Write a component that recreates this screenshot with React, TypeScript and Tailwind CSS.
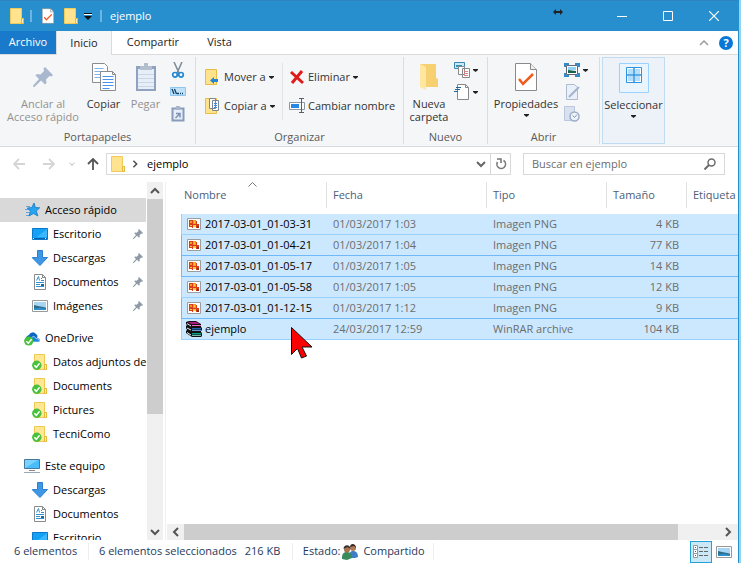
import React from 'react';
import clsx from 'clsx';

interface FileRow {
  name: string;
  date: string;
  type: string;
  size: string;
  kind: 'png' | 'rar';
  edge: string;
}

interface NavItem {
  label: string;
  icon: React.ReactNode;
  root?: boolean;
  active?: boolean;
  pinned?: boolean;
}

const FolderIcon = ({ className = 'w-3.5 h-4' }: { className?: string }) => (
  <svg className={className} viewBox="0 0 14 16">
    <path d="M.5.5h11v10h2v5H.5z" fill="#ffe38f" stroke="#f0cb58" />
    <path d="M11.500 10.500h2v5h-2z" fill="#ffeeb5" stroke="#e3b93c" />
  </svg>
);

const SyncedFolderIcon = () => (
  <svg className="w-4 h-4" viewBox="0 0 16 16">
    <path d="M2.500.5h10v10h2v5h-12z" fill="#ffe795" stroke="#efc94f" />
    <path d="M12.500 10.500h2v5h-2z" fill="#ffeeb5" stroke="#e3b93c" />
    <circle cx="4.800" cy="11.200" r="4.700" fill="#45c13a" />
    <path d="M2.300 11.300l2 2 3.300-4" fill="none" stroke="#fff" strokeWidth="1.500" />
  </svg>
);

const StarIcon = () => (
  <svg className="w-4 h-4" viewBox="0 0 16 16">
    <path d="M2 4.500h4M1 7.500h4M2 10.500h4M2 13.500h4" stroke="#5aa9dd" />
    <path d="M10 1l1.300 4.500 4.400.3-3.400 3.300 1.600 4.900-4.400-2.500L5 14l1.500-4.700L3.300 6l4.600-.4z" fill="#27a4f2" stroke="#1277c4" strokeWidth=".8" />
  </svg>
);

const DesktopIcon = () => (
  <svg className="w-4 h-4" viewBox="0 0 16 16">
    <path d="M.5 2.500h15v11H.5z" fill="#12a1f5" stroke="#0a78cc" />
    <path d="M15 3v8H5z" fill="#3bb7ff" />
    <path d="M1 12.500h14" stroke="#075fa8" />
    <path d="M1 12.500h1M13 12.500h1" stroke="#fff" />
  </svg>
);

const DownloadIcon = () => (
  <svg className="w-4 h-4" viewBox="0 0 16 16">
    <path d="M5.500.5h5v7h5L8 15.500.5 8V7.500h5z" fill="#3d97e3" stroke="#2c7fd0" />
  </svg>
);

const DocumentIcon = () => (
  <svg className="w-4 h-4" viewBox="0 0 16 16">
    <path d="M2.500.5h8l3 3v12h-11z" fill="#fff" stroke="#8a8a8a" />
    <path d="M10.500.5v3h3" fill="none" stroke="#8a8a8a" />
    <path d="M4.500 6.500l2-4 1 4M9 4.500h1M9 6.500h3M4 8.500h8M4 10.500h4M4 12.500h8" fill="none" stroke="#3592d0" />
    <path d="M9 10h3v2H9z" fill="#24658f" />
  </svg>
);

const PictureIcon = () => (
  <svg className="w-4 h-4" viewBox="0 0 16 16">
    <path d="M.5 2.500h15v11H.5z" fill="#fff" stroke="#999" />
    <path d="M2 4h12v5H2z" fill="#a9d5f5" />
    <path d="M2 7l4 1 8 1.500V12H2z" fill="#2f6c8c" />
    <path d="M2 10.500l6-.8 6 1V12H2z" fill="#2c8ecb" />
  </svg>
);

const OneDriveIcon = () => (
  <svg className="w-4 h-4" viewBox="0 0 16 16">
    <path d="M2 10a4 4 0 0 1 3-5 4 4 0 0 1 7-1 3 3 0 0 1 1 4 2.700 2.700 0 0 1 2.500 4H4z" fill="#0d68c4" />
    <path d="M7 12V8.500C8 6 11 6 12 8.500c2 0 3.500 1 3.500 3.500z" fill="#1683e0" stroke="#fff" strokeWidth=".6" />
    <circle cx="4.700" cy="11" r="4.600" fill="#45c13a" />
    <path d="M2.300 11.200l2 2 3.300-4" fill="none" stroke="#fff" strokeWidth="1.500" />
  </svg>
);

const ComputerIcon = () => (
  <svg className="w-4 h-4" viewBox="0 0 16 16">
    <path d="M.5 1.500h15v9H.5z" fill="#49bdfb" stroke="#47799f" />
    <path d="M1 10L14 2H1z" fill="#7bd2fd" />
    <path d="M5 12.500h6" stroke="#888" />
    <path d="M0 14.500h16" stroke="#9aaab8" />
  </svg>
);

const PinIcon = ({ className, color }: { className: string; color: string }) => (
  <svg className={className} viewBox="0 0 20 20" fill={color}>
    <path d="M12 0l8 8-1.500 1.500-2-.5-3.500 3.500.5 3.500-1.500 1.500-4-4L1.500 20 0 20l.5-2L6 12 2.500 8.500 4 7l3.500.5L11 4l-.5-2.500z" />
  </svg>
);

const PngIcon = () => (
  <svg className="w-3.5 h-3" viewBox="0 0 14 12">
    <path d="M.5.5h13v11H.5z" fill="#fff" stroke="#9d9d9d" />
    <path d="M2 2h6v1h2v3h2v4H9V9H6v1H5V9H2z" fill="#dc3a1c" />
    <path d="M3 3h2v2H3zM6 2h3v4H6z" fill="#f79a1b" />
    <path d="M3 7h2v1H3zM7 3h1v2H7zM6 7h3v2H6z" fill="#ffca35" />
    <path d="M10 8h2v2h-2z" fill="#88331f" />
  </svg>
);

const RarIcon = () => (
  <svg className="w-4 h-4" viewBox="0 0 16 16">
    <path d="M0 1l3-1h7l5 3v3l1 1v2l-1 1v1l1 1v3l-1 1H6l-6-4v-2l1-1-1-2V5l1-1-1-1z" fill="#111" />
    <path d="M2 1h8l4 2H5z" fill="#b01683" />
    <path d="M6 4h9v1H6z" fill="#f06ac7" />
    <path d="M6 7h9v1.500H6z" fill="#1d62b5" />
    <path d="M6 9h9v.8H6z" fill="#7fbcf0" />
    <path d="M6 12h9v1.500H6z" fill="#0d9b80" />
    <path d="M6 14h9v.8H6z" fill="#8ce3cf" />
    <path d="M1 2.500l4 2.500M1 7l4 2M1 11.500l4 2.500" stroke="#eee" />
  </svg>
);

const Caret = () => (
  <svg className="w-[5px] h-[3px] shrink-0" viewBox="0 0 5 3">
    <path d="M0 0h5v1L2.500 3 0 1z" fill="#222" />
  </svg>
);

const Chevron = ({ className, color = '#555', width = 2 }: { className: string; color?: string; width?: number }) => (
  <svg className={className} viewBox="0 0 10 10" fill="none" stroke={color} strokeWidth={width}>
    <path d="M1 3l4 4 4-4" />
  </svg>
);

const CopyIcon = () => (
  <svg className="w-6 h-7" viewBox="0 0 24 28">
    <path d="M.5.5h12l3 3v16H.5z" fill="#fff" stroke="#8b8b8b" />
    <path d="M2.500 5.500h9M2.500 8.500h9M2.500 11.500h9M2.500 14.500h6" stroke="#7fb2ee" />
    <path d="M8.500 8.500h12l3 3v16h-15z" fill="#fff" stroke="#8b8b8b" />
    <path d="M20.500 8.500v3h3" fill="none" stroke="#8b8b8b" />
    <path d="M10.500 13.500h11M10.500 16.500h11M10.500 19.500h11M10.500 22.500h11M10.500 25.500h7" stroke="#4b92ea" />
  </svg>
);

const PasteIcon = () => (
  <svg className="w-5 h-[30px]" viewBox="0 0 20 30">
    <path d="M0 4h20v25H0z" fill="#8fa2bf" />
    <path d="M2 7h16v20H2z" fill="#e8eef8" />
    <path d="M2 12.500h16M2 16.500h16M2 20.500h16M2 24.500h16" stroke="#cbd7e9" />
    <path d="M4 4h4V1h4v3h4v4H4z" fill="#b4bfce" />
  </svg>
);

const ScissorsIcon = () => (
  <svg className="w-4 h-4" viewBox="0 0 16 16" fill="none">
    <path d="M4 0l5 11M12 0L7 11" stroke="#788896" strokeWidth="1.500" />
    <circle cx="5" cy="12.800" r="2.300" stroke="#2288cf" strokeWidth="1.700" />
    <circle cx="11" cy="12.800" r="2.300" stroke="#2288cf" strokeWidth="1.700" />
  </svg>
);

const CopyPathIcon = () => (
  <svg className="w-4 h-4" viewBox="0 0 16 16" fill="none">
    <path d="M.5 3.500h15v8H.5z" fill="#bfe2fa" stroke="#8cc6ee" />
    <path d="M2 5l2 5M4.500 5l2 5M7 9.500h2M10 9.500h1M12 9.500h1" stroke="#123f65" strokeWidth="1.300" />
  </svg>
);

const PasteShortcutIcon = () => (
  <svg className="w-4 h-4" viewBox="0 0 16 16" fill="none">
    <path d="M2.500 2.500h11v12h-11z" fill="#e8eef8" stroke="#879cbb" strokeWidth="2" />
    <path d="M6 0h4v4H6z" fill="#a8b5c8" />
    <path d="M5.500 12l4-4M6 7.500h4v4" stroke="#7e93b3" strokeWidth="1.500" />
  </svg>
);

const MoveToIcon = () => (
  <svg className="w-4 h-4" viewBox="0 0 16 16">
    <path d="M.5.5h11v15H.5z" fill="#ffe28c" stroke="#e8bd46" />
    <path d="M5 11.500L9 8v2h4v3H9v2z" fill="#2685d3" />
  </svg>
);

const CopyToIcon = () => (
  <svg className="w-4 h-4" viewBox="0 0 16 16">
    <path d="M.5.5h11v15H.5z" fill="#ffe28c" stroke="#e8bd46" />
    <path d="M4.500.5h6v10h-6zM7.500 2.500h6v10h-6z" fill="#fff" stroke="#7d8791" />
    <path d="M9 5.500h3M9 7.500h3M9 9.500h3" stroke="#3c87d8" />
  </svg>
);

const RenameIcon = () => (
  <svg className="w-4 h-4" viewBox="0 0 16 16" fill="none">
    <path d="M.5 4.500h15v7H.5z" fill="#fff" stroke="#8c97a3" />
    <path d="M2 6h8v4H2z" fill="#2688e4" />
    <path d="M12.500 1v13M10 .5h5M10 14.500h5" stroke="#57616b" />
  </svg>
);

const NewFolderIcon = () => (
  <svg className="w-5 h-7" viewBox="0 0 20 28">
    <path d="M1 1h16v14l2 1v8H5z" fill="#f7d171" />
    <path d="M1 1l6 3v23l-6-3z" fill="#ffe7a1" />
  </svg>
);

const NewItemIcon = () => (
  <svg className="w-4 h-4" viewBox="0 0 16 16">
    <path d="M.5.5h10v6H.5z" fill="#cce9f8" stroke="#3b87b0" />
    <path d="M2 3h6v2H2z" fill="#3593b8" />
    <path d="M4.500 4.500h6v8h-6zM8.500 6.500h7v9h-7z" fill="#fff" stroke="#888" />
    <path d="M10 9.500h4M10 11.500h4M10 13.500h4" stroke="#e08383" />
  </svg>
);

const EasyAccessIcon = () => (
  <svg className="w-4 h-4" viewBox="0 0 16 16" fill="none">
    <path d="M3.500.5h8l3 3v12h-11z" fill="#fff" stroke="#888" />
    <path d="M11.500.5v3h3" stroke="#888" />
    <path d="M2 3.500h5M1 5.500h5M0 7.500h4" stroke="#20659c" />
  </svg>
);

const CheckDocIcon = ({ className }: { className: string }) => (
  <svg className={className} viewBox="0 0 22 28" fill="none">
    <path d="M.5.500h15l6 6v21H.5z" fill="#fff" stroke="#8a8a8a" />
    <path d="M15.500.5v6h6" fill="#eee" stroke="#8a8a8a" />
    <path d="M4 16l4 5L18 11" stroke="#f05a1c" strokeWidth="2.500" />
  </svg>
);

const OpenIcon = () => (
  <svg className="w-4 h-4" viewBox="0 0 16 16" fill="none">
    <path d="M1 5V2h4M11 2h4v3M15 11v3h-4M5 14H1v-3" stroke="#318bcb" strokeWidth="2" />
    <path d="M2.500 3.500h11v9h-11z" fill="#fff" stroke="#667" />
    <path d="M4 5h8v3H4z" fill="#8ed2f5" />
    <path d="M4 8l8 1v2H4z" fill="#17624f" />
  </svg>
);

const EditIcon = () => (
  <svg className="w-4 h-4" viewBox="0 0 16 16" fill="none">
    <path d="M2.500.5h8l3 3v12h-11z" fill="#eaf0f9" stroke="#aebbd0" />
    <path d="M5 13l10-10" stroke="#a3b3cd" strokeWidth="2" />
  </svg>
);

const HistoryIcon = () => (
  <svg className="w-4 h-4" viewBox="0 0 16 16" fill="none">
    <path d="M.5.5h10v14H.5z" fill="#d9e1ef" stroke="#bac7dc" />
    <circle cx="10.500" cy="10.500" r="4.500" fill="#eef2f9" stroke="#9cadc8" strokeWidth="1.500" />
    <path d="M8.500 9.500l2 2 2.500-3" stroke="#8598b8" />
  </svg>
);

const SelectIcon = () => (
  <svg className="w-[30px] h-[30px]" viewBox="0 0 30 30" fill="none">
    <path d="M.5.5h29v29H.5z" fill="#eaf4fc" stroke="#99d1ff" />
    <path d="M7.500 4.500h15v15h-15z" fill="#fff" stroke="#2b93e0" />
    <path d="M9 6h5v5H9zM16 6h5v5h-5zM9 13h5v5H9zM16 13h5v5h-5z" fill="#b5defc" />
    <path d="M15 4v16M7 12h16" stroke="#2b93e0" strokeWidth="1.500" />
  </svg>
);

const PeopleIcon = () => (
  <svg className="w-4 h-4" viewBox="0 0 16 16">
    <path d="M7 14c0-5 1-7 4-7s5 2 5 6l-3 1z" fill="#3d7fc2" />
    <circle cx="11" cy="4" r="3" fill="#b07a56" />
    <path d="M8 3c0-4 6-4 6 1l-2-2z" fill="#3a2a22" />
    <path d="M0 15c0-5 1-7 5-7s5 3 5 6l-5 2z" fill="#3b8a5c" />
    <circle cx="5" cy="5.500" r="3" fill="#a97250" />
    <path d="M1.500 5c0-5 7-5 7 0l-3-2z" fill="#30302f" />
  </svg>
);

const navItems: NavItem[][] = [
  [
    { label: 'Acceso rápido', icon: <StarIcon />, root: true, active: true },
    { label: 'Escritorio', icon: <DesktopIcon />, pinned: true },
    { label: 'Descargas', icon: <DownloadIcon />, pinned: true },
    { label: 'Documentos', icon: <DocumentIcon />, pinned: true },
    { label: 'Imágenes', icon: <PictureIcon />, pinned: true },
  ],
  [
    { label: 'OneDrive', icon: <OneDriveIcon />, root: true },
    { label: 'Datos adjuntos de', icon: <SyncedFolderIcon /> },
    { label: 'Documents', icon: <SyncedFolderIcon /> },
    { label: 'Pictures', icon: <SyncedFolderIcon /> },
    { label: 'TecniComo', icon: <SyncedFolderIcon /> },
  ],
  [
    { label: 'Este equipo', icon: <ComputerIcon />, root: true },
    { label: 'Descargas', icon: <DownloadIcon /> },
    { label: 'Documentos', icon: <DocumentIcon /> },
    { label: 'Escritorio', icon: <DesktopIcon /> },
  ],
];

const files: FileRow[] = [
  { name: '2017-03-01_01-03-31', date: '01/03/2017 1:03', type: 'Imagen PNG', size: '4 KB', kind: 'png', edge: 'border-[#99d1ff]' },
  { name: '2017-03-01_01-04-21', date: '01/03/2017 1:04', type: 'Imagen PNG', size: '77 KB', kind: 'png', edge: 'border-[#70b8f8]' },
  { name: '2017-03-01_01-05-17', date: '01/03/2017 1:05', type: 'Imagen PNG', size: '14 KB', kind: 'png', edge: 'border-[#70b8f8]' },
  { name: '2017-03-01_01-05-58', date: '01/03/2017 1:05', type: 'Imagen PNG', size: '12 KB', kind: 'png', edge: 'border-[#99d1ff]' },
  { name: '2017-03-01_01-12-15', date: '01/03/2017 1:12', type: 'Imagen PNG', size: '9 KB', kind: 'png', edge: 'border-[#70b8f8]' },
  { name: 'ejemplo', date: '24/03/2017 12:59', type: 'WinRAR archive', size: '104 KB', kind: 'rar', edge: 'border-[#99d1ff]' },
];

const Group = ({ label, className, children }: { label: string; className: string; children: React.ReactNode }) => (
  <section className={clsx('flex flex-col shrink-0 my-0.5 border-r border-[#dcddde]', className)}>
    <div className="flex flex-1">{children}</div>
    <h2 className="pb-px text-center leading-[13px] text-[#5a5a5a]">{label}</h2>
  </section>
);

const BigButton = ({ icon, lines, className, caret, disabled }: { icon: React.ReactNode; lines: string[]; className: string; caret?: boolean; disabled?: boolean }) => (
  <button disabled={disabled} className={clsx('flex flex-col items-center shrink-0 pt-1 leading-[13px] whitespace-nowrap disabled:text-[#929292]', className)}>
    <span className="flex h-8 mb-1 items-center justify-center">{icon}</span>
    {lines.map(line => <span key={line}>{line}</span>)}
    {caret && <span className="mt-1"><Caret /></span>}
  </button>
);

const SmallButton = ({ icon, label, text, caret }: { icon: React.ReactNode; label: string; text?: boolean; caret?: boolean }) => (
  <button aria-label={label} className="flex items-center gap-[3px] h-4 whitespace-nowrap">
    {icon}
    {text && <span>{label}</span>}
    {caret && <Caret />}
  </button>
);

const TitleBar = () => (
  <header className="flex items-center h-[31px] shrink-0 pl-2.5 bg-[#288fce] border-t border-[#2f84bd] text-white">
    <FolderIcon />
    <span className="w-0.5 h-3 ml-1.5 mr-2.5 bg-[#6bb5e2]" />
    <button aria-label="Propiedades"><CheckDocIcon className="w-3 h-4" /></button>
    <button aria-label="Nueva carpeta" className="ml-2.5"><FolderIcon /></button>
    <button aria-label="Personalizar" className="ml-1.5">
      <svg className="w-2 h-2" viewBox="0 0 8 8">
        <path d="M0 1.500h8" stroke="#111" />
        <path d="M0 4h8L4 8z" fill="#111" />
        <path d="M0 2.500h8" stroke="#fff" />
      </svg>
    </button>
    <span className="w-0.5 h-3 mx-2 bg-[#6bb5e2]" />
    <h1>ejemplo</h1>
    <svg className="w-2.5 h-2 ml-auto mr-9 mb-2" viewBox="0 0 10 8">
      <path d="M0 4l3-3v2h4V1l3 3-3 3V5H3v2z" fill="#222" />
    </svg>
    <button aria-label="Minimizar" className="flex justify-center w-[46px]">
      <svg className="w-2.5 h-2.5" viewBox="0 0 10 10"><path d="M0 5.500h10" stroke="#fff" /></svg>
    </button>
    <button aria-label="Maximizar" className="flex justify-center w-[46px]">
      <svg className="w-2.5 h-2.5" viewBox="0 0 10 10"><path d="M.5.5h9v9h-9z" fill="none" stroke="#fff" /></svg>
    </button>
    <button aria-label="Cerrar" className="flex justify-center w-[46px] mr-px">
      <svg className="w-2.5 h-2.5" viewBox="0 0 10 10"><path d="M0 0l10 10M10 0L0 10" stroke="#fff" strokeWidth="1.200" /></svg>
    </button>
  </header>
);

const Tabs = () => (
  <nav className="flex h-6 shrink-0 border-b border-[#dadbdc] bg-white">
    <button className="w-14 bg-[#1979ca] text-white">Archivo</button>
    <button className="w-14 -mb-px border-x border-[#dadbdc] bg-[#f5f6f7]">Inicio</button>
    <button className="w-[82px]">Compartir</button>
    <button className="w-[51px]">Vista</button>
    <button aria-label="Minimizar la cinta" className="ml-auto mr-2.5">
      <Chevron className="w-2.5 h-2.5 rotate-180" color="#999" width={1.5} />
    </button>
    <button aria-label="Ayuda" className="self-center w-3.5 h-3.5 mr-[5px] rounded-full bg-[#0878d7] text-white text-[11px] leading-[14px] font-bold">?</button>
  </nav>
);

const Ribbon = () => (
  <div className="flex h-[92px] shrink-0 overflow-hidden border-b border-[#dadbdc] bg-[#f5f6f7] text-[#333]">
    <Group label="Portapapeles" className="w-[196px]">
      <BigButton className="w-[86px]" icon={<PinIcon className="w-5 h-5" color="#a9b8ce" />} lines={['Anclar al', 'Acceso rápido']} disabled />
      <BigButton className="w-[35px]" icon={<CopyIcon />} lines={['Copiar']} />
      <BigButton className="w-[49px]" icon={<PasteIcon />} lines={['Pegar']} disabled />
      <div className="flex flex-col gap-1.5 pt-[5px]">
        <SmallButton icon={<ScissorsIcon />} label="Cortar" />
        <SmallButton icon={<CopyPathIcon />} label="Copiar ruta de acceso" />
        <SmallButton icon={<PasteShortcutIcon />} label="Pegar acceso directo" />
      </div>
    </Group>
    <Group label="Organizar" className="w-[208px]">
      <div className="flex flex-col gap-[13px] w-[87px] h-[57px] mt-1.5 pt-1.5 pl-[9px] border-r border-[#e2e3e4]">
        <SmallButton icon={<MoveToIcon />} label="Mover a" text caret />
        <SmallButton icon={<CopyToIcon />} label="Copiar a" text caret />
      </div>
      <div className="flex flex-col gap-[13px] pt-3 pl-1.5">
        <SmallButton
          icon={<svg className="w-4 h-4" viewBox="0 0 16 16"><path d="M2 3l12 11M13 2L3 14" stroke="#df1b1b" strokeWidth="3" /></svg>}
          label="Eliminar"
          text
          caret
        />
        <SmallButton icon={<RenameIcon />} label="Cambiar nombre" text />
      </div>
    </Group>
    <Group label="Nuevo" className="w-[84px]">
      <BigButton className="w-[50px]" icon={<NewFolderIcon />} lines={['Nueva', 'carpeta']} />
      <div className="flex flex-col gap-1.5 pt-[5px]">
        <SmallButton icon={<NewItemIcon />} label="Nuevo elemento" caret />
        <SmallButton icon={<EasyAccessIcon />} label="Fácil acceso" caret />
      </div>
    </Group>
    <Group label="Abrir" className="w-28">
      <BigButton className="w-[76px]" icon={<CheckDocIcon className="w-[22px] h-7" />} lines={['Propiedades']} caret />
      <div className="flex flex-col gap-1.5 pt-[5px]">
        <SmallButton icon={<OpenIcon />} label="Abrir" caret />
        <SmallButton icon={<EditIcon />} label="Modificar" />
        <SmallButton icon={<HistoryIcon />} label="Historial" />
      </div>
    </Group>
    <div className="flex shrink-0 w-[63px] my-0.5 ml-0.5 bg-[#ecf2f8] border border-[#c0dcf3]">
      <BigButton className="w-full" icon={<SelectIcon />} lines={['Seleccionar']} caret />
    </div>
  </div>
);

const Arrow = ({ className, color }: { className: string; color: string }) => (
  <svg className={className} viewBox="0 0 12 12" fill="none" stroke={color} strokeWidth="1.800">
    <path d="M12 6H1M6 1L1 6l5 5" />
  </svg>
);

const AddressBar = () => (
  <div className="flex items-center h-[35px] shrink-0 pr-[13px] pb-px bg-white">
    <button aria-label="Atrás" className="ml-[13px]"><Arrow className="w-3 h-3" color="#d5d5d5" /></button>
    <button aria-label="Adelante" className="ml-[18px]"><Arrow className="w-3 h-3 rotate-180" color="#d5d5d5" /></button>
    <button aria-label="Recientes" className="ml-3.5"><Chevron className="w-1.5 h-1.5" color="#ccc" /></button>
    <button aria-label="Subir" className="ml-3"><Arrow className="w-3 h-3 rotate-90" color="#555" /></button>
    <div className="flex flex-1 items-center h-[22px] ml-[7px] border border-[#d9d9d9]">
      <span className="ml-1"><FolderIcon /></span>
      <Chevron className="w-2 h-2 ml-1.5 -rotate-90" />
      <a href="#ejemplo" className="ml-2 text-black">ejemplo</a>
      <button aria-label="Ubicaciones anteriores" className="ml-auto mr-1"><Chevron className="w-2.5 h-2.5" color="#666" /></button>
      <button aria-label="Actualizar" className="flex items-center justify-center w-5 h-full border-l border-[#d9d9d9]">
        <svg className="w-3 h-3" viewBox="0 0 12 12" fill="none" stroke="#777" strokeWidth="1.600">
          <path d="M8.500 2.500A4.300 4.300 0 1 1 2.500 4" />
          <path d="M2 1h4v4" />
        </svg>
      </button>
    </div>
    <div className="flex items-center w-[202px] h-[22px] ml-3 pl-2 pr-2 border border-[#d9d9d9]">
      <input aria-label="Buscar" type="text" placeholder="Buscar en ejemplo" className="flex-1 min-w-0 outline-none placeholder:text-[#6d6d6d]" />
      <svg className="w-3 h-3" viewBox="0 0 12 12" fill="none" stroke="#6d6d6d">
        <circle cx="7.500" cy="4.500" r="3.500" strokeWidth="1.500" />
        <path d="M5 7l-4.500 4.500" strokeWidth="2" />
      </svg>
    </div>
  </div>
);

const Sidebar = () => (
  <aside className="flex shrink-0 w-[166px] border-r border-[#f0f0f0] overflow-hidden">
    <nav className="w-[147px] pt-4 overflow-hidden text-black">
      {navItems.map((section, index) => (
        <ul key={index} className="mb-2">
          {section.map(item => (
            <li key={item.label}>
              <a
                href="#nav"
                className={clsx('flex items-center h-6 whitespace-nowrap', item.root ? 'pl-6' : 'pl-8', item.active && 'w-[146px] bg-[#d9d9d9]')}
              >
                <span className="shrink-0">{item.icon}</span>
                <span className="ml-[5px]">{item.label}</span>
                {item.pinned && <span className="ml-auto mr-1"><PinIcon className="w-2.5 h-2.5" color="#8d9aa5" /></span>}
              </a>
            </li>
          ))}
        </ul>
      ))}
    </nav>
    <div className="flex flex-col items-center w-4 bg-[#f0f0f0]">
      <button aria-label="Subir lista" className="flex items-center h-[17px]"><Chevron className="w-2.5 h-2.5 rotate-180" /></button>
      <div className="w-full h-[219px] max-h-3/5 bg-[#cdcdcd]" />
      <button aria-label="Bajar lista" className="flex items-center h-[17px] mt-auto"><Chevron className="w-2.5 h-2.5" /></button>
    </div>
  </aside>
);

const columns = [
  { label: 'Nombre', width: 'w-[146px]', pad: 'pl-[3px]' },
  { label: 'Fecha', width: 'w-40', pad: 'pl-1.5' },
  { label: 'Tipo', width: 'w-[120px]', pad: 'pl-1.5' },
  { label: 'Tamaño', width: 'w-20', pad: 'pl-1.5' },
  { label: 'Etiqueta', width: 'w-auto', pad: 'pl-1.5' },
];

const FileList = () => (
  <main className="flex flex-col flex-1 min-w-0 pl-px">
    <div className="relative flex-1 min-h-0 overflow-hidden pl-3.5">
      <table className="w-full table-fixed border-separate border-spacing-0 whitespace-nowrap">
        <thead>
          <tr>
            {columns.map((column, index) => (
              <th key={column.label} className={clsx('p-0 pb-1.5 font-normal text-left text-[#4c607a]', column.width)}>
                <button className={clsx('relative block w-full h-[26px] pt-px text-left border-r', column.pad, index < 4 ? 'border-[#e0e0e0]' : 'border-transparent')}>
                  {column.label}
                  {index === 0 && (
                    <svg className="absolute top-0 left-[67px] w-[9px] h-[5px]" viewBox="0 0 9 5" fill="none" stroke="#777">
                      <path d="M.5 4.500l4-4 4 4" />
                    </svg>
                  )}
                </button>
              </th>
            ))}
          </tr>
        </thead>
        <tbody className="text-[#6d6d6d]">
          {files.map(file => (
            <tr key={file.name} className="bg-[#cce8ff]">
              <td className={clsx('p-0 border-b border-l text-black', file.edge)}>
                <div className="flex items-center h-5">
                  <span className="flex justify-center w-[23px]">{file.kind === 'png' ? <PngIcon /> : <RarIcon />}</span>
                  {file.name}
                </div>
              </td>
              <td className={clsx('p-0 pl-1.5 border-b', file.edge)}>{file.date}</td>
              <td className={clsx('p-0 pl-1.5 border-b', file.edge)}>{file.type}</td>
              <td className={clsx('p-0 pr-2 border-b text-right', file.edge)}>{file.size}</td>
              <td className={clsx('p-0 border-b', file.edge)} />
            </tr>
          ))}
        </tbody>
      </table>
      {/* mouse pointer */}
      <svg className="absolute left-[124px] top-[145px] w-[22px] h-8" viewBox="0 0 22 32">
        <path d="M.5.5v27l6-6 4 9.500 5-2-4.500-9h10z" fill="#f00" stroke="#111" />
      </svg>
    </div>
    <div className="flex items-center h-4 shrink-0 bg-[#f0f0f0]">
      <button aria-label="Desplazar a la izquierda" className="flex justify-center w-[17px]"><Chevron className="w-2.5 h-2.5 rotate-90" /></button>
      <div className="flex-1 h-full mr-10 bg-[#cdcdcd]" />
      <button aria-label="Desplazar a la derecha" className="flex justify-center w-5"><Chevron className="w-2.5 h-2.5 -rotate-90" /></button>
    </div>
  </main>
);

const StatusBar = () => (
  <footer className="flex items-center h-[23px] shrink-0 pl-3.5 text-[#1e395b] whitespace-nowrap">
    <span className="w-[75px] border-r border-[#ededed]">6 elementos</span>
    <span className="ml-2.5">6 elementos seleccionados</span>
    <span className="w-12 ml-2 border-r border-[#ededed]">216 KB</span>
    <span className="ml-2.5 mr-0.5">Estado:</span>
    <PeopleIcon />
    <span className="ml-[5px] pr-2 border-r border-[#ededed]">Compartido</span>
    <button aria-label="Detalles" className="flex items-center justify-center w-[22px] h-[22px] ml-auto bg-[#cbe8f6] border border-[#26a0da]">
      <svg className="w-4 h-3.5" viewBox="0 0 16 14" fill="none">
        <path d="M.5.5h4v4h-4zM.5 4.500h4v4h-4zM.5 8.500h4v4h-4z" fill="#fff" stroke="#999" />
        <path d="M2 2.500h1M2 6.500h1M2 10.500h1" stroke="#c03030" />
        <path d="M6 2.500h4M11 2.500h4M6 6.500h4M11 6.500h4M6 10.500h4M11 10.500h4" stroke="#666" />
      </svg>
    </button>
    <button aria-label="Iconos grandes" className="ml-1 mr-2"><span className="block w-3.5 h-4"><PictureIcon /></span></button>
  </footer>
);

export default function App() {
  return (
    <div className="h-screen pr-0.5 bg-[#92d6ea] font-['Open_Sans','Noto_Sans',sans-serif] text-[11px] text-[#222]">
      <div className="flex flex-col h-full border-r border-[#288fce] bg-white">
        <TitleBar />
        <Tabs />
        <Ribbon />
        <AddressBar />
        <div className="flex flex-1 min-h-0">
          <Sidebar />
          <FileList />
        </div>
        <StatusBar />
      </div>
    </div>
  );
}
